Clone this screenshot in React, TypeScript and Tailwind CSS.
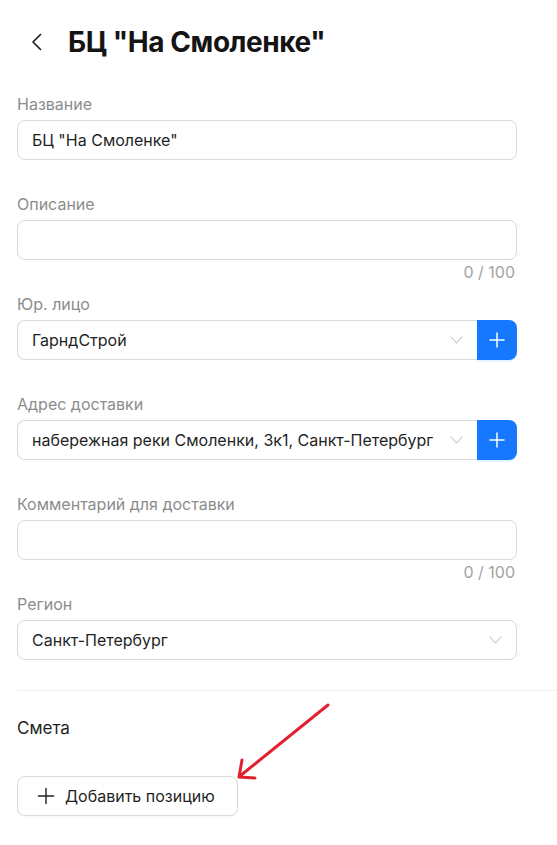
import { Plus } from 'lucide-react';

const font = { fontFamily: 'Inter, "Noto Sans", sans-serif' };

function Label({ children }: { children: React.ReactNode }) {
  return <div className="h-6 mb-1 text-[16px] leading-6 text-[#8c8c8c]">{children}</div>;
}

function Counter() {
  return <div className="h-6 pr-[2px] text-right text-[16px] leading-6 text-[#a3a3a3]">0 / 100</div>;
}

function Chevron() {
  return (
    <svg className="ml-2 mr-[2px] shrink-0" width="13" height="8" viewBox="0 0 13 8" fill="none">
      <path d="M1 1 L6.5 7 L12 1" stroke="#c4c4c4" strokeWidth="1.1" strokeLinecap="round" strokeLinejoin="round" />
    </svg>
  );
}

function TextField({ label, value, counter }: { label: string; value?: string; counter?: boolean }) {
  return (
    <div className={counter ? 'mb-2' : 'mb-8'}>
      <Label>{label}</Label>
      <div className="h-10 rounded-lg border border-[#d9d9d9] bg-white px-[14px] flex items-center text-[16px] text-[#1f1f1f]">
        {value}
      </div>
      {counter && <Counter />}
    </div>
  );
}

function SelectField({ label, value, addon }: { label: string; value: string; addon?: boolean }) {
  return (
    <div className="mb-8">
      <Label>{label}</Label>
      <div className="flex h-10">
        <div
          className={
            'flex-1 min-w-0 flex items-center border border-[#d9d9d9] bg-white pl-[14px] pr-[12px] text-[16px] text-[#1f1f1f] ' +
            (addon ? 'rounded-l-lg border-r-0' : 'rounded-lg')
          }
        >
          <span className="flex-1 truncate">{value}</span>
          <Chevron />
        </div>
        {addon && (
          <button className="w-10 h-10 rounded-r-lg bg-[#1677ff] flex items-center justify-center shadow-[0_2px_0_rgba(5,145,255,0.1)]">
            <Plus className="w-6 h-6 text-white" strokeWidth={1.5} />
          </button>
        )}
      </div>
    </div>
  );
}

export default function App() {
  return (
    <div className="relative min-h-[845px] bg-white text-[#1f1f1f] overflow-hidden" style={font}>
      <div className="pt-6 pl-[31px] mb-8 flex items-center h-[60px] box-border">
        <svg width="12" height="18" viewBox="0 0 12 18" fill="none">
          <path d="M9.5 1.5 L2 9 L9.5 16.5" stroke="#1f1f1f" strokeWidth="1.7" strokeLinecap="round" strokeLinejoin="round" />
        </svg>
        <h1 className="ml-[25px] text-[28px] leading-9 font-bold tracking-[-0.45px] text-[#141414]">
          БЦ "На Смоленке"
        </h1>
      </div>

      <div className="pl-[17px]">
        <div className="w-[500px]">
          <TextField label="Название" value='БЦ "На Смоленке"' />
          <TextField label="Описание" counter />
          <SelectField label="Юр. лицо" value="ГарндСтрой" addon />
          <SelectField label="Адрес доставки" value="набережная реки Смоленки, 3к1, Санкт-Петербург" addon />
          <TextField label="Комментарий для доставки" counter />
          <div className="-mb-[2px]">
            <SelectField label="Регион" value="Санкт-Петербург" />
          </div>
        </div>

        <div className="border-t border-[#f0f0f0]" />

        <div className="mt-[25px] h-6 text-[17px] leading-6 text-[#1f1f1f]">Смета</div>

        <button className="mt-[36px] h-10 pl-[20px] pr-[22px] rounded-lg border border-[#d9d9d9] bg-white flex items-center gap-[11px] text-[16px] text-[#1f1f1f] shadow-[0_2px_0_rgba(0,0,0,0.02)]">
          <Plus className="w-[26px] h-[26px] -mx-[5px]" strokeWidth={1.3} />
          Добавить позицию
        </button>
      </div>

      {/* annotation arrow */}
      <svg className="absolute left-0 top-0 pointer-events-none" width="557" height="845" viewBox="0 0 557 845">
        <g stroke="#e3202f" strokeWidth="3" strokeLinecap="round" strokeLinejoin="round" fill="none">
          <path d="M328 705 L240 776" />
          <path d="M242 760 L239 777 L255 778" />
        </g>
      </svg>
    </div>
  );
}
